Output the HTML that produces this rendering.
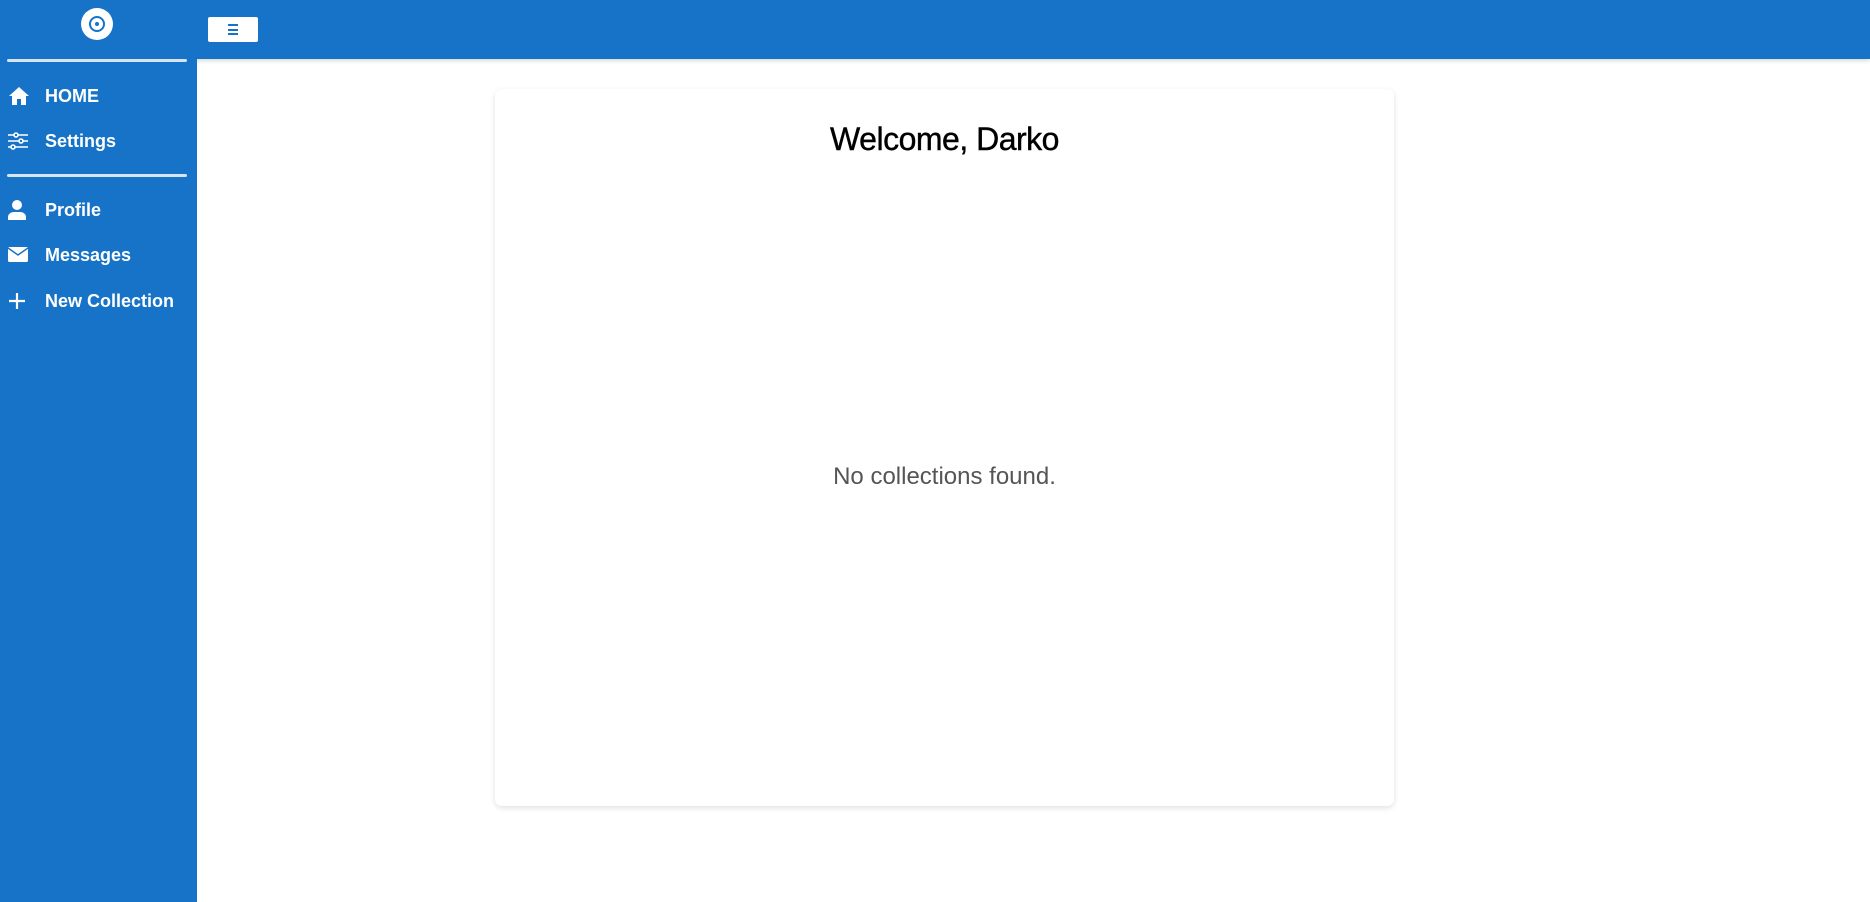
<!DOCTYPE html>
<html><head><meta charset="utf-8"><style>
*{margin:0;padding:0;box-sizing:border-box}
body{width:1870px;height:902px;background:#fff;font-family:"Liberation Sans",Roboto,sans-serif;position:relative;overflow:hidden}
.top{position:absolute;left:0;top:0;width:1870px;height:59px;background:#1773c8;box-shadow:0 2px 4px rgba(0,0,0,.15)}
.side{position:absolute;left:0;top:0;width:197px;height:902px;background:#1773c8}
.logo{position:absolute;left:81px;top:8px;width:32px;height:32px;border-radius:50%;background:#fff}
.logo:before{content:"";position:absolute;left:8px;top:8px;width:16px;height:16px;border-radius:50%;box-sizing:border-box;border:2.5px solid #1773c8}
.logo:after{content:"";position:absolute;left:14px;top:14px;width:4px;height:4px;border-radius:50%;background:#1773c8}
.hb{position:absolute;left:208px;top:17px;width:50px;height:25px;background:#fff;border-radius:2px}
.hb i{position:absolute;left:20px;width:10px;height:2px;background:#1773c8}
.div{position:absolute;left:7px;width:180px;height:3px;background:#d6e4f3;border-radius:2px}
.it{position:absolute;left:0;height:30px;color:#fff;font-weight:bold;font-size:18px;display:flex;align-items:center}
.it svg{position:absolute;left:8px}
.it span{position:absolute;left:45px;white-space:nowrap}
.card{position:absolute;left:495px;top:89px;width:899px;height:717px;background:#fff;border-radius:7px;box-shadow:0 2px 6px rgba(0,0,0,.12)}
h1{position:absolute;top:32px;width:100%;text-align:center;font-size:32px;font-weight:normal;color:#000;letter-spacing:-0.5px;-webkit-text-stroke:0.4px #000}
p{position:absolute;top:374px;width:100%;text-align:center;font-size:24px;color:#555}
</style></head><body>
<div class="top"></div>
<div class="side"></div>
<div class="logo"></div>
<div class="hb"><i style="top:7px"></i><i style="top:11.5px"></i><i style="top:16px"></i></div>
<div class="div" style="top:59px"></div>
<div class="div" style="top:174px"></div>
<div class="it" style="top:81px"><svg width="22" height="20" viewBox="0 0 22 20"><path d="M11 1L1 10h3v9h5v-6h4v6h5v-9h3z" fill="#fff"/></svg><span>HOME</span></div>
<div class="it" style="top:126px"><svg width="20" height="18" viewBox="0 0 20 18" fill="none" stroke="#fff" stroke-width="1.6"><path d="M0 3h20M0 9h20M0 15h20"/><circle cx="8" cy="3" r="2" fill="#1773c8"/><circle cx="13" cy="9" r="2" fill="#1773c8"/><circle cx="5" cy="15" r="2" fill="#1773c8"/></svg><span>Settings</span></div>
<div class="it" style="top:195px"><svg width="18" height="20" viewBox="0 0 18 20"><circle cx="9" cy="5" r="5" fill="#fff"/><path d="M0 20v-3c0-3 3-5 6-5h6c3 0 6 2 6 5v3z" fill="#fff"/></svg><span>Profile</span></div>
<div class="it" style="top:240px"><svg width="20" height="16" viewBox="0 0 20 16"><rect width="20" height="15" rx="1.5" fill="#fff"/><path d="M0 1l10 7 10-7" fill="none" stroke="#1773c8" stroke-width="1.5"/></svg><span>Messages</span></div>
<div class="it" style="top:286px"><svg width="18" height="18" viewBox="0 0 18 18"><path d="M9 1v16M1 9h16" stroke="#fff" stroke-width="2.2"/></svg><span>New Collection</span></div>
<div class="card"><h1>Welcome, Darko</h1><p>No collections found.</p></div>
</body></html>
